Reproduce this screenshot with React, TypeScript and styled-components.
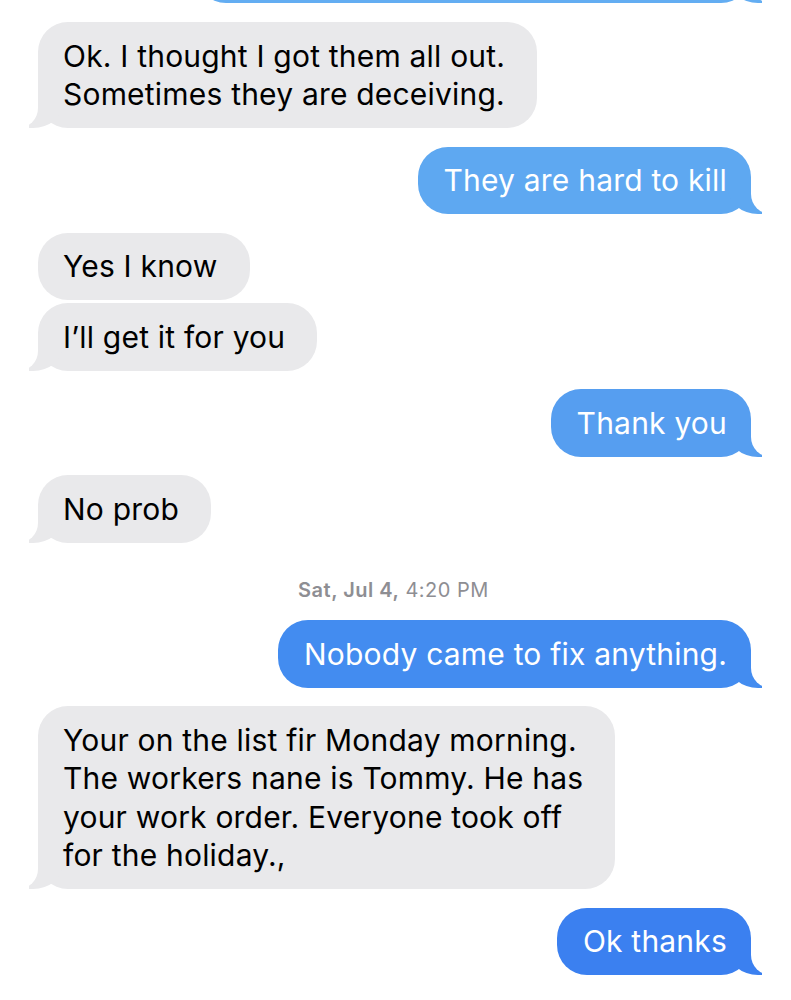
import React from "react";
import styled, { createGlobalStyle, css } from "styled-components";

const Global = createGlobalStyle`
  html, body { margin: 0; padding: 0; background: #ffffff; }
  body { font-family: Inter, "Liberation Sans", Arial, sans-serif; -webkit-font-smoothing: antialiased; }
`;

const Page = styled.div`
  width: 791px;
  height: 1000px;
  overflow: hidden;
  background: #ffffff;
  display: flex;
  flex-direction: column;
  padding: 0 40px 0 38px;
  box-sizing: border-box;
`;

const Row = styled.div<{ $mine?: boolean; $gap: number }>`
  display: flex;
  justify-content: ${(p) => (p.$mine ? "flex-end" : "flex-start")};
  margin-top: ${(p) => p.$gap}px;
`;

const tailMine = (color: string) => css`
  &::before {
    content: "";
    position: absolute;
    bottom: 0;
    right: -11px;
    width: 34px;
    height: 36px;
    background: ${color};
    border-bottom-left-radius: 30px 26px;
  }
  &::after {
    content: "";
    position: absolute;
    bottom: 0;
    right: -40px;
    width: 40px;
    height: 36px;
    background: #ffffff;
    border-bottom-left-radius: 20px;
  }
`;

const tailTheirs = css`
  &::before {
    content: "";
    position: absolute;
    bottom: 0;
    left: -9px;
    width: 34px;
    height: 36px;
    background: #e9e9eb;
    border-bottom-right-radius: 30px 26px;
  }
  &::after {
    content: "";
    position: absolute;
    bottom: 0;
    left: -40px;
    width: 40px;
    height: 36px;
    background: #ffffff;
    border-bottom-right-radius: 20px;
  }
`;

const Bubble = styled.div<{ $mine?: boolean; $color?: string; $tail?: boolean }>`
  position: relative;
  max-width: 600px;
  box-sizing: border-box;
  font-size: 30px;
  line-height: 38.5px;
  letter-spacing: 0.2px;
  border-radius: 30px;
  padding: ${(p) => (p.$mine ? "14.5px 24px 14.5px 26px" : "14.5px 32px 14.5px 25px")};
  background: ${(p) => (p.$mine ? p.$color : "#e9e9eb")};
  color: ${(p) => (p.$mine ? "#ffffff" : "#000000")};
  white-space: pre-line;
  ${(p) => (p.$tail ? (p.$mine ? tailMine(p.$color || "#3a7ff0") : tailTheirs) : "")}
`;

const Inner = styled.span`
  position: relative;
  z-index: 1;
`;

const CutBubble = styled(Bubble)`
  width: 555px;
  height: 60px;
  margin-top: -57px;
`;

const Stamp = styled.div`
  margin: 35px 0 0;
  height: 24px;
  line-height: 24px;
  text-align: center;
  font-size: 20px;
  color: #8e8e93;
  letter-spacing: 0.5px;
  transform: translateX(-1px);
`;

const StampDay = styled.span`
  font-weight: 600;
`;

type Msg = { text: string; mine?: boolean; color?: string; tail?: boolean; gap: number };

const before: Msg[] = [
  { text: "Ok. I thought I got them all out.\nSometimes they are deceiving.", tail: true, gap: 19 },
  { text: "They are hard to kill", mine: true, color: "#5ea8f1", tail: true, gap: 18.5 },
  { text: "Yes I know", gap: 18.5 },
  { text: "I\u2019ll get it for you", tail: true, gap: 3 },
  { text: "Thank you", mine: true, color: "#569ef0", tail: true, gap: 18.5 },
  { text: "No prob", tail: true, gap: 18.5 },
];

const after: Msg[] = [
  { text: "Nobody came to fix anything.", mine: true, color: "#438cf0", tail: true, gap: 18.5 },
  {
    text: "Your on the list fir Monday morning.\nThe workers nane is Tommy. He has\nyour work order. Everyone took off\nfor the holiday.,",
    tail: true,
    gap: 18.5,
  },
  { text: "Ok thanks", mine: true, color: "#3b80f0", tail: true, gap: 18.5 },
];

const Message = ({ m }: { m: Msg }) => (
  <Row $mine={m.mine} $gap={m.gap}>
    <Bubble $mine={m.mine} $color={m.color} $tail={m.tail}>
      <Inner>{m.text}</Inner>
    </Bubble>
  </Row>
);

export default function App() {
  return (
    <>
      <Global />
      <Page>
        <Row $mine $gap={0}>
          <CutBubble $mine $color="#63adf2" $tail />
        </Row>
        {before.map((m, i) => (
          <Message key={i} m={m} />
        ))}
        <Stamp>
          <StampDay>Sat, Jul 4,</StampDay> 4:20 PM
        </Stamp>
        {after.map((m, i) => (
          <Message key={i} m={m} />
        ))}
      </Page>
    </>
  );
}
